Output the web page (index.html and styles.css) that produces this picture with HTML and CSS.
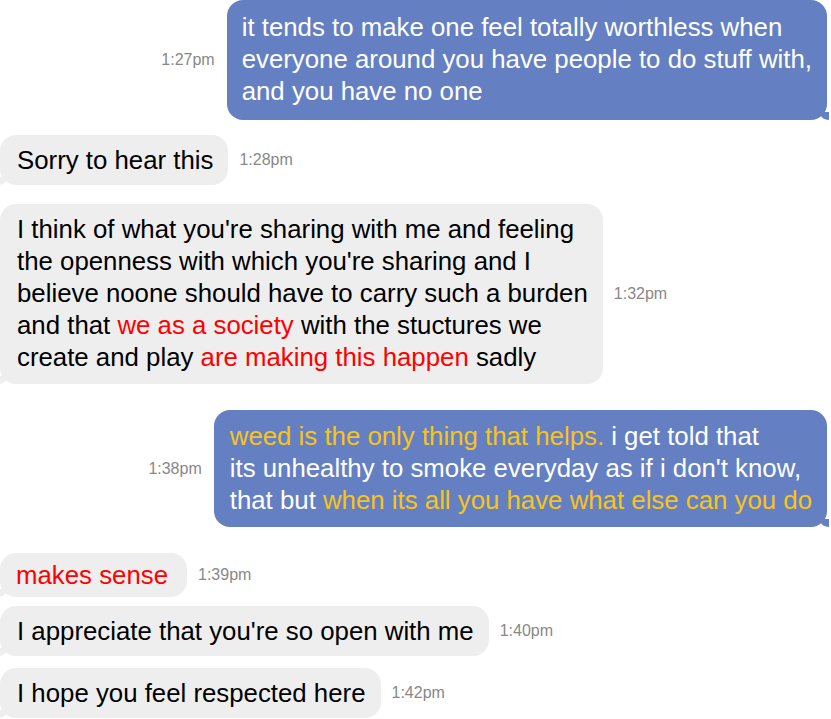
FILE: index.html
```html
<!DOCTYPE html>
<html>
<head>
<meta charset="utf-8">
<link rel="stylesheet" href="styles.css">
</head>
<body>
<div class="chat">
  <div class="row out r1">
    <span class="time">1:27pm</span>
    <div class="bubble blue">it tends to make one feel totally worthless when<br>everyone around you have people to do stuff with,<br>and you have no one</div>
  </div>
  <div class="row in r2">
    <div class="bubble gray">Sorry to hear this</div>
    <span class="time">1:28pm</span>
  </div>
  <div class="row in r3">
    <div class="bubble gray tall">I think of what you're sharing with me and feeling<br>the openness with which you're sharing and I<br>believe noone should have to carry such a burden<br>and that <span class="red">we as a society</span> with the stuctures we<br>create and play <span class="red">are making this happen</span> sadly</div>
    <span class="time">1:32pm</span>
  </div>
  <div class="row out r4">
    <span class="time">1:38pm</span>
    <div class="bubble blue b2"><span class="yellow">weed is the only thing that helps.</span> i get told that<br>its unhealthy to smoke everyday as if i don't know,<br>that but <span class="yellow">when its all you have what else can you do</span></div>
  </div>
  <div class="row in r5">
    <div class="bubble gray short"><span class="red">makes sense</span></div>
    <span class="time">1:39pm</span>
  </div>
  <div class="row in r6">
    <div class="bubble gray">I appreciate that you're so open with me</div>
    <span class="time">1:40pm</span>
  </div>
  <div class="row in r7">
    <div class="bubble gray">I hope you feel respected here</div>
    <span class="time">1:42pm</span>
  </div>
</div>
</body>
</html>
```
FILE: styles.css
```css
* { box-sizing: border-box; }
html, body { margin: 0; padding: 0; background: #fff; }
body {
  width: 831px;
  height: 719px;
  overflow: hidden;
  font-family: "Liberation Sans", Arial, Helvetica, sans-serif;
}
.chat {
  display: flex;
  flex-direction: column;
  padding: 0 4px 0 0;
}
.row {
  display: flex;
  align-items: center;
  gap: 11px;
}
.row.out { justify-content: flex-end; gap: 12px; }
.row.in { justify-content: flex-start; }
.r2 { margin-top: 15px; }
.r3 { margin-top: 19px; }
.r4 { margin-top: 26px; }
.r5 { margin-top: 26px; }
.r6 { margin-top: 9px; }
.r7 { margin-top: 12px; }
.bubble {
  position: relative;
  font-size: 25.8px;
  line-height: 32px;
  white-space: nowrap;
  border-radius: 16px;
}
.blue {
  background: #6580c2;
  color: #fff;
  padding: 11px 15px 13px 15px;
}
.b2 { padding: 10px 15px 11px 16px; }
.gray {
  background: #eeeeee;
  color: #000;
  padding: 9px 15px 9px 17px;
}
.gray.tall { padding: 9px 15px 11px 17px; }
.gray.short { padding: 6px 19px 6px 16px; }
.gray::after {
  content: "";
  position: absolute;
  left: -2px;
  bottom: 0;
  width: 8px;
  height: 8px;
  background: #eeeeee;
  border-bottom-right-radius: 8px 5px;
}
.blue::after {
  content: "";
  position: absolute;
  right: -2px;
  bottom: 0;
  width: 8px;
  height: 8px;
  background: #6580c2;
  border-bottom-left-radius: 8px 5px;
}
.time {
  font-size: 16px;
  color: #888;
  white-space: nowrap;
}
.red { color: #ff0000; }
.yellow { color: #f7c41a; }
```
